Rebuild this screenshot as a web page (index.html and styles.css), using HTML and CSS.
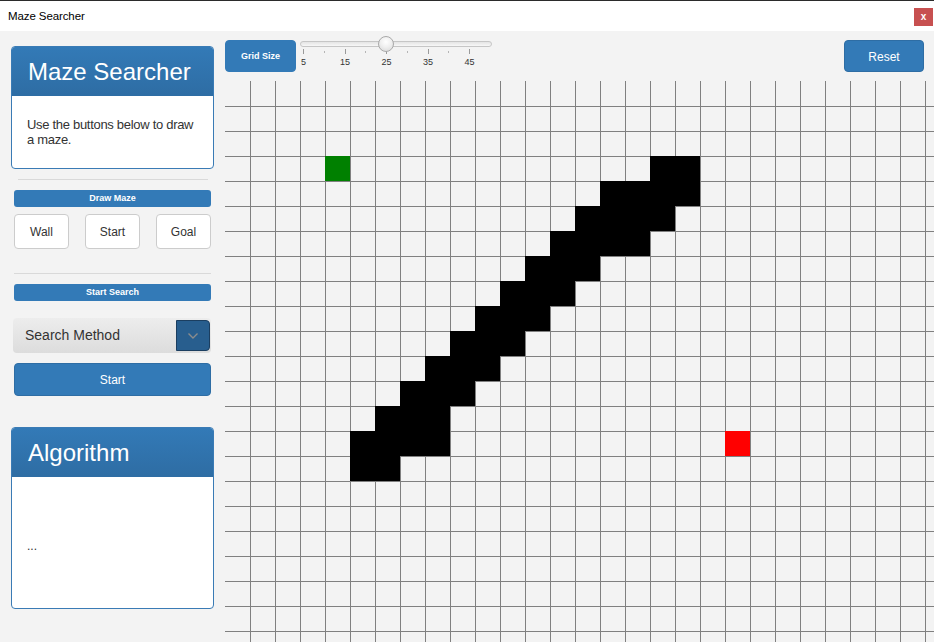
FILE: index.html
```html
<!DOCTYPE html>
<html lang="en">
<head>
<meta charset="utf-8">
<title>Maze Searcher</title>
<link rel="stylesheet" href="styles.css">
</head>
<body>
<div class="window">
  <header class="titlebar">
    <span class="title">Maze Searcher</span>
    <button class="close" type="button">x</button>
  </header>
  <div class="app">
    <aside class="sidebar">
      <section class="panel intro-panel">
        <div class="panel-heading"><h2>Maze Searcher</h2></div>
        <div class="panel-body intro-body"><p>Use the buttons below to draw a maze.</p></div>
      </section>
      <hr class="sep sep-short">
      <div class="bar">Draw Maze</div>
      <div class="btn-row">
        <button class="btn-plain" type="button">Wall</button>
        <button class="btn-plain" type="button">Start</button>
        <button class="btn-plain" type="button">Goal</button>
      </div>
      <hr class="sep sep-long">
      <div class="bar bar-search">Start Search</div>
      <div class="select">
        <span class="select-label">Search Method</span>
        <span class="select-arrow">
          <svg width="10" height="6" viewBox="0 0 10 6"><polyline points="0.5,0.5 5,5 9.5,0.5" fill="none" stroke="#8c8c8c" stroke-width="1.4"/></svg>
        </span>
      </div>
      <button class="btn-primary start-btn" type="button">Start</button>
      <section class="panel algo-panel">
        <div class="panel-heading"><h2>Algorithm</h2></div>
        <div class="panel-body algo-body"><p>...</p></div>
      </section>
    </aside>
    <main class="main">
      <div class="toolbar">
        <button class="btn-primary grid-size" type="button">Grid Size</button>
        <div class="slider">
          <div class="track"></div>
          <div class="thumb"></div>
          <div class="ticks">
            <span class="tick major"></span><span class="tick"></span>
            <span class="tick major"></span><span class="tick"></span>
            <span class="tick major"></span><span class="tick"></span>
            <span class="tick major"></span><span class="tick"></span>
            <span class="tick major"></span>
          </div>
          <div class="labels">
            <span>5</span><span>15</span><span>25</span><span>35</span><span>45</span>
          </div>
        </div>
        <button class="btn-primary reset" type="button">Reset</button>
      </div>
      <div class="maze" id="maze"></div>
    </main>
  </div>
</div>
<script src="script.js"></script>
</body>
</html>
```

FILE: styles.css
```css
* { box-sizing: border-box; }
html, body { margin: 0; padding: 0; }
body {
  width: 934px;
  height: 642px;
  overflow: hidden;
  background: #f3f3f3;
  font-family: "Liberation Sans", Arial, sans-serif;
  color: #333;
}
button { font-family: inherit; cursor: pointer; }
p, h2 { margin: 0; }

.window { width: 934px; height: 642px; display: flex; flex-direction: column; }

.titlebar {
  height: 31px;
  flex: none;
  background: #fff;
  border-top: 1px solid #2b2b2b;
  display: flex;
  align-items: center;
  justify-content: space-between;
  padding: 0 1px 0 8px;
}
.title { font-size: 11.5px; color: #000; letter-spacing: -0.1px; }
.close {
  width: 19px;
  height: 18px;
  margin-top: 1px;
  border: none;
  padding: 0;
  background: #c75050;
  color: #fff;
  font-size: 10px;
  font-weight: bold;
  line-height: 16px;
}

.app { flex: 1; display: flex; min-height: 0; }

.sidebar {
  width: 214px;
  flex: none;
  padding: 15px 0 0 11px;
  display: flex;
  flex-direction: column;
}

.panel {
  border: 1px solid #3a7bb5;
  border-radius: 4px;
  background: #fff;
  overflow: hidden;
}
.panel-heading {
  height: 49px;
  background: linear-gradient(to bottom, #337ab7 0%, #2e6da4 100%);
  display: flex;
  align-items: center;
  padding: 1px 0 0 16px;
  border-bottom: 1px solid #2e6da4;
}
.panel-heading h2 {
  font-size: 24px;
  font-weight: normal;
  color: #fff;
  line-height: 28px;
}
.intro-body {
  height: 72px;
  padding: 21px 15px 0 15px;
  font-size: 13px;
  letter-spacing: -0.3px;
  line-height: 15px;
  color: #333;
}
.algo-panel { margin-top: 31px; }
.algo-body {
  height: 131px;
  padding: 61px 15px 0 15px;
  font-size: 12px;
  line-height: 16px;
  color: #333;
}

.sep {
  border: none;
  height: 1px;
  background: #d9d9d9;
  margin: 10px 3px 0 3px;
}
.sep-short { margin: 10px 6px 0 7px; }
.sep-long { margin-top: 24px; }

.bar {
  margin: 10px 3px 0 3px;
  height: 17px;
  line-height: 17px;
  background: #337ab7;
  border-radius: 3px;
  color: #fff;
  font-size: 9px;
  font-weight: bold;
  text-align: center;
}

.btn-row {
  margin: 7px 3px 0 3px;
  display: flex;
  justify-content: space-between;
}
.btn-plain {
  width: 55px;
  height: 35px;
  background: #fff;
  border: 1px solid #ccc;
  border-radius: 4px;
  font-size: 12px;
  color: #333;
  padding: 0;
}

.select {
  margin: 17px 3px 0 2px;
  height: 35px;
  border-radius: 4px;
  background: linear-gradient(to bottom, #ededed 0%, #dcdcdc 100%);
  display: flex;
  align-items: stretch;
  padding: 2px 1px 2px 12px;
}
.select-label {
  flex: 1;
  font-size: 14px;
  line-height: 31px;
  color: #333;
}
.select-arrow {
  width: 34px;
  background: #285e8e;
  border: 1px solid #1b3e60;
  border-radius: 0 4px 4px 0;
  display: flex;
  align-items: center;
  justify-content: center;
}
.select-arrow svg { display: block; margin-top: 1px; }

.btn-primary {
  background: #337ab7;
  color: #fff;
  border: 1px solid #2e6da4;
  border-radius: 4px;
  padding: 0;
}
.start-btn {
  margin: 10px 3px 0 3px;
  height: 33px;
  font-size: 12px;
}

.main {
  flex: 1;
  min-width: 0;
  padding: 9px 0 0 11px;
  display: flex;
  flex-direction: column;
}
.toolbar {
  height: 32px;
  flex: none;
  display: flex;
  align-items: flex-start;
  padding-right: 10px;
}
.grid-size {
  width: 71px;
  height: 32px;
  font-size: 9px;
  font-weight: bold;
  border-color: #337ab7;
}
.reset {
  margin-left: auto;
  width: 80px;
  height: 32px;
  font-size: 12px;
  padding-top: 1px;
}

.slider {
  position: relative;
  width: 192px;
  margin-left: 4px;
}
.track {
  margin-top: 1px;
  height: 6px;
  border: 1px solid #c6c6c6;
  border-radius: 3px;
  background: linear-gradient(to bottom, #e4e4e4, #f7f7f7);
}
.thumb {
  position: absolute;
  top: -4px;
  left: 78px;
  width: 16px;
  height: 16px;
  border-radius: 50%;
  border: 1px solid #a9a9a9;
  background: radial-gradient(circle at 50% 35%, #ffffff 0%, #f0f0f0 45%, #d6d6d6 100%);
}
.ticks {
  margin: 2px 0 0 3px;
  width: 167px;
  height: 5px;
  display: flex;
  justify-content: space-between;
  align-items: center;
}
.tick { width: 1px; height: 2px; background: #b5b5b5; }
.tick.major { height: 5px; background: #9a9a9a; }
.labels {
  margin: 3px 0 0 3px;
  width: 167px;
  display: flex;
  justify-content: space-between;
  font-size: 9px;
  line-height: 11px;
  color: #333;
}
.labels span {
  width: 1px;
  display: flex;
  justify-content: center;
  white-space: nowrap;
}

.maze {
  margin-top: 9px;
  flex: 1;
  min-height: 0;
  overflow: hidden;
  display: grid;
  grid-template-columns: repeat(29, 25px);
  grid-auto-rows: 25px;
  background: #f3f3f3;
}
.cell {
  border-left: 1px solid #808080;
  border-top: 1px solid #808080;
}
.cell.first-col { border-left: none; }
.cell.first-row { border-top: none; }
.cell.wall { background: #000; border-color: #000; }
.cell.start { background: #008000; border-color: #008000; }
.cell.goal { background: #ff0000; border-color: #ff0000; }
```

FILE: script.js
```js
(function () {
  var COLS = 29, ROWS = 23;
  var walls = {
    3: [17, 18], 4: [15, 18], 5: [14, 17], 6: [13, 16], 7: [12, 14],
    8: [11, 13], 9: [10, 12], 10: [9, 11], 11: [8, 10], 12: [7, 9],
    13: [6, 8], 14: [5, 8], 15: [5, 6]
  };
  var start = [3, 4], goal = [14, 20];
  var maze = document.getElementById('maze');
  var frag = document.createDocumentFragment();
  for (var r = 0; r < ROWS; r++) {
    for (var c = 0; c < COLS; c++) {
      var d = document.createElement('div');
      var cls = 'cell';
      if (c === 0) cls += ' first-col';
      if (r === 0) cls += ' first-row';
      var w = walls[r];
      if (w && c >= w[0] && c <= w[1]) cls += ' wall';
      if (r === start[0] && c === start[1]) cls += ' start';
      if (r === goal[0] && c === goal[1]) cls += ' goal';
      d.className = cls;
      frag.appendChild(d);
    }
  }
  maze.appendChild(frag);
})();
```
